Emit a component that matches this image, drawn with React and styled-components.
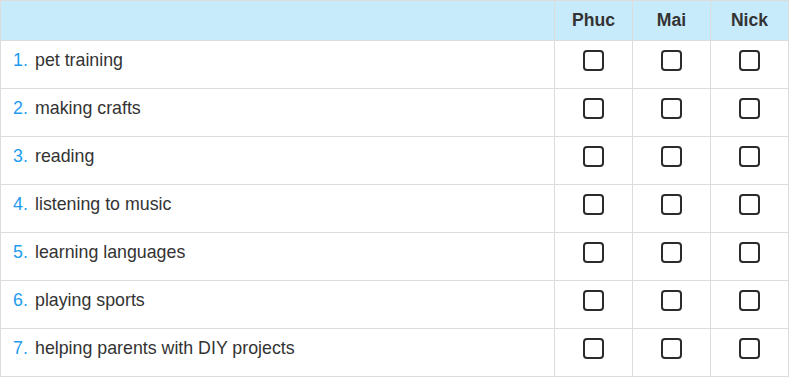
import styled, { createGlobalStyle } from 'styled-components'

const GlobalStyle = createGlobalStyle`
  body {
    margin: 0;
    background: #fff;
    font-family: 'Liberation Sans', Arial, sans-serif;
  }
`

const people = ['Phuc', 'Mai', 'Nick']

const hobbies = [
  'pet training',
  'making crafts',
  'reading',
  'listening to music',
  'learning languages',
  'playing sports',
  'helping parents with DIY projects',
]

const App = () => {
  return (
    <>
      <GlobalStyle />
      <Grid>
        <HeadCell />
        {people.map((name) => (
          <HeadCell key={name}>{name}</HeadCell>
        ))}

        {hobbies.map((item, i) => (
          <Row key={item}>
            <TextCell>
              <Num>{i + 1}.</Num>
              {item}
            </TextCell>
            {people.map((name) => (
              <BoxCell key={name}>
                <Box />
              </BoxCell>
            ))}
          </Row>
        ))}
      </Grid>
    </>
  )
}

export default App

const Grid = styled.div`
  display: grid;
  grid-template-columns: 554px 78px 78px 78px;
  width: 789px;
  border-top: 1px solid #dcdcdc;
  border-left: 1px solid #dcdcdc;
  box-sizing: border-box;
  color: #333;
  font-size: 17.8px;
`
const Row = styled.div`
  display: contents;
`
const Cell = styled.div`
  border-right: 1px solid #dcdcdc;
  border-bottom: 1px solid #dcdcdc;
  box-sizing: border-box;
`
const HeadCell = styled(Cell)`
  height: 40px;
  background-color: #c8ebfc;
  display: flex;
  align-items: center;
  justify-content: center;
  font-weight: bold;
  font-size: 17.6px;
  color: #333;
`
const TextCell = styled(Cell)`
  height: 48px;
  padding: 7px 0 0 12px;
  line-height: 24px;
`
const Num = styled.span`
  display: inline-block;
  width: 22px;
  color: #1e9bef;
`
const BoxCell = styled(Cell)`
  height: 48px;
  padding-top: 9px;
  display: flex;
  justify-content: center;
  align-items: flex-start;
`
const Box = styled.span`
  display: block;
  width: 21px;
  height: 21px;
  box-sizing: border-box;
  border: 2px solid #2b2b2b;
  border-radius: 4px;
`
